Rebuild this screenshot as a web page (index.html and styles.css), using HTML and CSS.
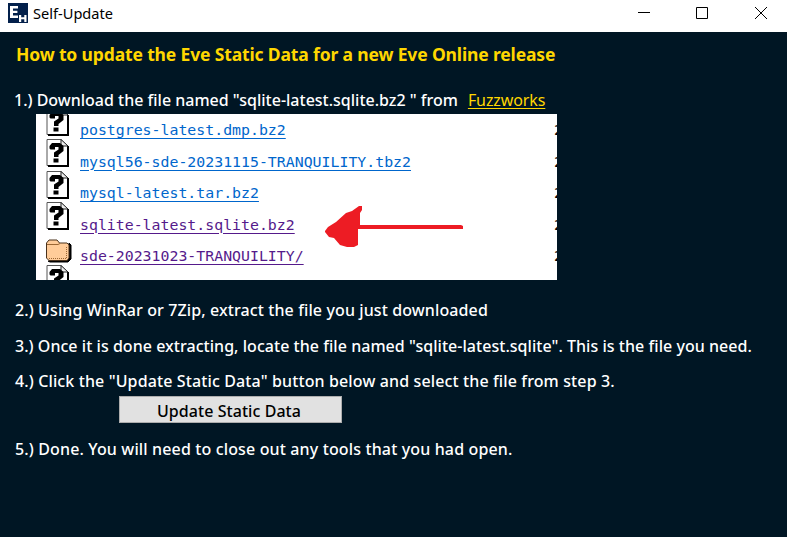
FILE: index.html
```html
<!DOCTYPE html>
<html lang="en">
<head>
<meta charset="utf-8">
<title>Self-Update</title>
<link rel="stylesheet" href="styles.css">
</head>
<body>
<svg width="0" height="0" class="defs">
  <symbol id="unknown" viewBox="0 0 24 28">
    <path d="M1 0.5H15L21.5 7V26.5H1Z" fill="#fff" stroke="#555"/>
    <path d="M22 7V27H2" fill="none" stroke="#000" stroke-width="2"/>
    <path d="M15 0.5V7H22Z" fill="#eee" stroke="#222"/>
    <path d="M3.5 9.5V7L6 4H14L17.5 7V12L12.5 16V18H8V13.5L12.5 10.5V8H9V10.5H4.5Z" fill="#000"/>
    <path d="M7.5 19.5H12.5V23.5H7.5Z" fill="#000"/>
  </symbol>
</svg>
<header class="titlebar">
  <svg class="logo" width="20" height="20" viewBox="0 0 20 20">
    <rect width="20" height="20" fill="#03204b"/>
    <path d="M2 3H10V5.4H5V7.7H9.4V10H5V12.5H10V15H2Z" fill="#fff"/>
    <path d="M11 12H13.2V14.3H16.3V12H18.5V19H16.3V16.3H13.2V19H11Z" fill="#fff"/>
  </svg>
  <span class="caption">Self-Update</span>
  <svg class="controls" width="140" height="32" viewBox="0 0 140 32" fill="none" stroke="#000">
    <path d="M-9 12.5H3M49.5 7.5H60.5V18.5H49.5ZM108 7L120 19M120 7L108 19"/>
  </svg>
</header>
<main>
  <h1>How to update the Eve Static Data for a new Eve Online release</h1>
  <p class="s1"><span>1.) Download the file named "sqlite-latest.sqlite.bz2 " from</span><a class="fuzz" href="#">Fuzzworks</a></p>
  <section class="listing">
    <div class="row r1"><svg class="ico"><use href="#unknown"/></svg><a href="#">postgres-latest.dmp.bz2</a><i>2</i></div>
    <div class="row"><svg class="ico"><use href="#unknown"/></svg><a href="#">mysql56-sde-20231115-TRANQUILITY.tbz2</a><i>2</i></div>
    <div class="row"><svg class="ico"><use href="#unknown"/></svg><a href="#">mysql-latest.tar.bz2</a><i>2</i></div>
    <div class="row"><svg class="ico"><use href="#unknown"/></svg><a class="seen" href="#">sqlite-latest.sqlite.bz2</a><i>2</i></div>
    <div class="row"><svg class="ico folder" viewBox="0 0 26 24">
      <path d="M2 22L4 23H22L25 20V6L23 4V20L21 22Z" fill="#000" stroke="#000"/>
      <path d="M0.5 4L3 1H11L13.5 4H21L23 6V19L21 21.5H3L0.5 19Z" fill="#ffcc99" stroke="#4a321c"/>
      <path d="M1 5.5H12L14 4.5" fill="none" stroke="#9a6633"/>
      <path d="M3 19.5H20.5V8" fill="none" stroke="#9a6633" stroke-dasharray="1 1"/>
    </svg><a class="seen" href="#">sde-20231023-TRANQUILITY/</a><i>2</i></div>
    <div class="row"><svg class="ico"><use href="#unknown"/></svg></div>
    <svg class="arrow" width="140" height="44" viewBox="324 205 140 44">
      <path d="M325 231L328 227L336 222L346 213L352 211L359 206H362V210L360 213V225H461L463 226V229H358V245L354 247H347L340 245L334 238L329 237L325 232Z" fill="#ed1c24"/>
    </svg>
  </section>
  <p class="s2">2.) Using WinRar or 7Zip, extract the file you just downloaded</p>
  <p class="s3">3.) Once it is done extracting, locate the file named "sqlite-latest.sqlite". This is the file you need.</p>
  <p class="s4">4.) Click the "Update Static Data" button below and select the file from step 3.</p>
  <button type="button">Update Static Data</button>
  <p class="s5">5.) Done. You will need to close out any tools that you had open.</p>
</main>
</body>
</html>
```
FILE: styles.css
```css
* { box-sizing: border-box; }
body { margin: 0; width: 787px; height: 537px; overflow: hidden; background: #001624; color: #fff; font: 500 16px/24px "Noto Sans", "Open Sans", sans-serif; }
.defs { position: absolute; }
.titlebar { height: 32px; background: #fff; color: #000; display: flex; padding-left: 8px; }
.logo { margin-top: 3px; flex: none; }
.caption { margin-left: 5px; font-size: 14.6px; font-weight: 400; line-height: 26px; white-space: nowrap; flex: 1; }
.controls { flex: none; overflow: visible; }
main { display: flex; flex-direction: column; white-space: nowrap; }
h1 { margin: 10px 0 0 16px; font-size: 17.5px; line-height: 24px; height: 24px; font-weight: 700; letter-spacing: -0.145px; color: #ffd700; }
p { margin: 0 0 0 15px; height: 24px; }
.s1 { margin: 22px 0 0 14px; display: flex; }
.fuzz { color: #ffd700; font-weight: 400; margin-left: 10px; letter-spacing: -0.1px; text-underline-offset: 2px; }
.listing { position: relative; width: 521px; height: 166px; margin: 2px 0 0 36px; background: #fff; overflow: hidden; font: 14.86px/20px "DejaVu Sans Mono", monospace; }
.row { display: flex; height: 31.5px; padding-left: 10px; }
.row a { width: 474px; flex: none; margin-left: 10px; padding-top: 12.5px; color: #0066cc; text-underline-offset: 3px; }
.row a.seen { color: #551a8b; }
.row i { font-style: normal; color: #000; padding-top: 12.5px; }
.ico { width: 24px; height: 28px; flex: none; }
.r1 { margin-top: -6.5px; }
.folder { width: 26px; height: 24px; margin: 5px -2px 0 0; }
.arrow { position: absolute; left: 288px; top: 91px; }
.s2 { margin-top: 18px; letter-spacing: 0.11px; }
.s3 { margin-top: 12px; letter-spacing: 0.04px; }
.s4 { margin-top: 11px; letter-spacing: 0.125px; }
button { width: 223px; height: 27px; margin: 3px 0 0 119px; padding: 2px 3px 0 0; border: 1px solid #adadad; background: #e1e1e1; color: #000; font: inherit; line-height: 24px; letter-spacing: 0.06px; }
.s5 { margin-top: 14px; letter-spacing: 0.14px; }
```
